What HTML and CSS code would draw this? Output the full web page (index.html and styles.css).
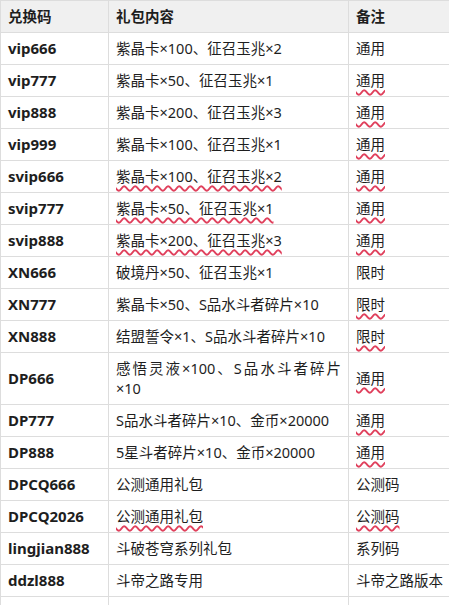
FILE: index.html
```html
<!DOCTYPE html>
<html lang="zh-CN">
<head>
<meta charset="utf-8">
<title>兑换码</title>
<link rel="stylesheet" href="styles.css">
</head>
<body>
<table class="codes">
  <colgroup>
    <col class="c-code">
    <col class="c-gift">
    <col class="c-note">
  </colgroup>
  <thead>
    <tr><th>兑换码</th><th>礼包内容</th><th>备注</th></tr>
  </thead>
  <tbody>
    <tr><td class="code">vip666</td><td class="gift">紫晶卡×100、征召玉兆×2</td><td class="note">通用</td></tr>
    <tr><td class="code">vip777</td><td class="gift">紫晶卡×50、征召玉兆×1</td><td class="note"><span class="sq">通用</span></td></tr>
    <tr><td class="code">vip888</td><td class="gift">紫晶卡×200、征召玉兆×3</td><td class="note"><span class="sq">通用</span></td></tr>
    <tr><td class="code">vip999</td><td class="gift">紫晶卡×100、征召玉兆×1</td><td class="note"><span class="sq">通用</span></td></tr>
    <tr><td class="code">svip666</td><td class="gift"><span class="sq">紫晶卡×100、征召玉兆×2</span></td><td class="note"><span class="sq">通用</span></td></tr>
    <tr><td class="code">svip777</td><td class="gift"><span class="sq">紫晶卡×50、征召玉兆×1</span></td><td class="note"><span class="sq">通用</span></td></tr>
    <tr><td class="code">svip888</td><td class="gift"><span class="sq">紫晶卡×200、征召玉兆×3</span></td><td class="note"><span class="sq">通用</span></td></tr>
    <tr><td class="code">XN666</td><td class="gift">破境丹×50、征召玉兆×1</td><td class="note">限时</td></tr>
    <tr><td class="code">XN777</td><td class="gift">紫晶卡×50、S品水斗者碎片×10</td><td class="note"><span class="sq">限时</span></td></tr>
    <tr><td class="code">XN888</td><td class="gift">结盟誓令×1、S品水斗者碎片×10</td><td class="note"><span class="sq">限时</span></td></tr>
    <tr><td class="code">DP666</td><td class="gift">感悟灵液×100、S品水斗者碎片<wbr>×10</td><td class="note"><span class="sq">通用</span></td></tr>
    <tr><td class="code">DP777</td><td class="gift">S品水斗者碎片×10、金币×20000</td><td class="note"><span class="sq">通用</span></td></tr>
    <tr><td class="code">DP888</td><td class="gift">5星斗者碎片×10、金币×20000</td><td class="note"><span class="sq">通用</span></td></tr>
    <tr><td class="code">DPCQ666</td><td class="gift">公测通用礼包</td><td class="note">公测码</td></tr>
    <tr><td class="code">DPCQ2026</td><td class="gift"><span class="sq">公测通用礼包</span></td><td class="note"><span class="sq">公测码</span></td></tr>
    <tr><td class="code">lingjian888</td><td class="gift">斗破苍穹系列礼包</td><td class="note">系列码</td></tr>
    <tr><td class="code">ddzl888</td><td class="gift">斗帝之路专用</td><td class="note">斗帝之路版本</td></tr>
    <tr><td class="code">dpcq999</td><td class="gift">斗破福利礼包</td><td class="note">通用</td></tr>
  </tbody>
</table>
</body>
</html>
```

FILE: styles.css
```css
html, body {
  margin: 0;
  padding: 0;
  background: #ffffff;
}

body {
  font-family: "Noto Sans", "Noto Sans CJK SC", sans-serif;
  font-size: 14.5px;
  color: #1e1e1e;
}

.codes {
  width: 449px;
  border-collapse: collapse;
  table-layout: fixed;
}

.c-code { width: 108px; }
.c-gift { width: 240px; }
.c-note { width: 101px; }

.codes th,
.codes td {
  border: 1px solid #dddddd;
  padding: 5px 7px 6px 7px;
  line-height: 20px;
  text-align: left;
  vertical-align: middle;
}

.codes th {
  background: #f0f0f0;
  font-weight: 700;
}

.codes td.code {
  font-size: 15px;
  font-weight: 700;
}

.codes td.gift {
  text-align: justify;
}

.codes td.note {
  padding-right: 4px;
  white-space: nowrap;
}

.sq {
  text-decoration: underline wavy #e0405c;
  text-decoration-thickness: 1.5px;
  text-underline-offset: 3px;
}
```
